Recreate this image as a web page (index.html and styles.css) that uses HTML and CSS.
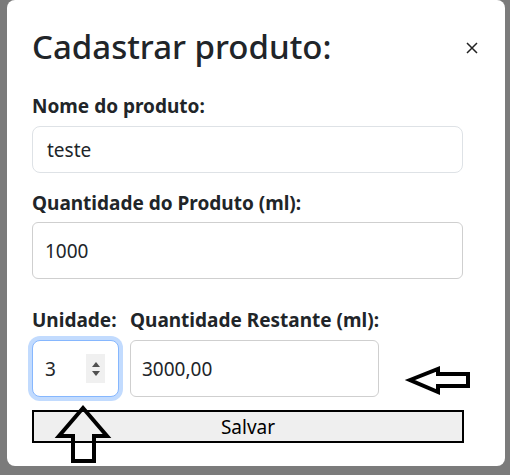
FILE: index.html
```html
<!DOCTYPE html>
<html lang="pt-BR">
<head>
<meta charset="utf-8">
<title>Cadastrar produto</title>
<link rel="stylesheet" href="styles.css">
</head>
<body>
<div class="stage">
  <div class="modal">
    <div class="modal-header">
      <h2 class="modal-title">Cadastrar produto:</h2>
      <span class="btn-close" aria-label="Fechar">
        <svg width="12" height="12" viewBox="0 0 12 12"><path d="M1 1L11 11M11 1L1 11" stroke="#222" stroke-width="1.5" fill="none"/></svg>
      </span>
    </div>
    <form class="modal-body">
      <label class="lbl lbl-first">Nome do produto:</label>
      <div class="field field-light">teste</div>
      <label class="lbl lbl-second">Quantidade do Produto (ml):</label>
      <div class="field field-tall">1000</div>
      <div class="row">
        <div class="col">
          <label class="lbl">Unidade:</label>
          <div class="field field-num">
            <span class="num-val">3</span>
            <span class="spinner"><span class="tri-up"></span><span class="tri-down"></span></span>
          </div>
        </div>
        <div class="col">
          <label class="lbl">Quantidade Restante (ml):</label>
          <div class="field field-tall field-rest">3000,00</div>
        </div>
      </div>
      <div class="btn-save">Salvar</div>
    </form>
  </div>
  <svg class="annot" width="510" height="475" viewBox="0 0 510 475">
    <polygon points="410,380 438,369 438,374 468,374 468,386 438,386 438,392" fill="none" stroke="#000" stroke-width="4" stroke-linejoin="miter"/>
    <polygon points="83,408 107,436 94,436 94,461 73,461 73,436 59,436" fill="none" stroke="#000" stroke-width="4" stroke-linejoin="miter"/>
  </svg>
</div>
</body>
</html>
```

FILE: styles.css
```css
html, body {
  margin: 0;
  padding: 0;
}
body {
  background: #7b7b7b;
  font-family: "Noto Sans", "Open Sans", "DejaVu Sans", sans-serif;
  color: #212529;
}
.stage {
  position: relative;
  width: 510px;
  height: 475px;
  overflow: hidden;
}
.modal {
  margin-left: 7px;
  width: 498px;
  height: 466px;
  box-sizing: border-box;
  background: #fff;
  border-radius: 8px;
  padding: 27px 25px 0 25px;
}
.modal-header {
  display: flex;
  align-items: center;
  justify-content: space-between;
  height: 40px;
}
.modal-title {
  margin: 0;
  font-size: 33px;
  font-weight: 500;
  line-height: 40px;
  color: #212529;
}
.btn-close {
  display: flex;
  width: 12px;
  height: 12px;
  margin-right: 2px;
  margin-top: 2px;
}
.modal-body {
  display: flex;
  flex-direction: column;
  width: 431px;
}
.lbl {
  display: block;
  font-size: 19px;
  font-weight: 700;
  line-height: 24px;
  margin-bottom: 8px;
}
.lbl-first {
  margin-top: 27px;
}
.lbl-second {
  margin-top: 18px;
  margin-bottom: 7px;
}
.field {
  box-sizing: border-box;
  display: flex;
  align-items: center;
  font-size: 19px;
  padding: 0 12px;
  background: #fff;
  color: #212529;
}
.field-light {
  height: 47px;
  border: 1px solid #dee2e6;
  border-radius: 8px;
  padding-left: 14px;
}
.field-tall {
  height: 57px;
  border: 1px solid #cfcfcf;
  border-radius: 6px;
}
.field-rest {
  padding-left: 11px;
}
.row {
  display: grid;
  grid-template-columns: 87px 249px;
  column-gap: 11px;
  margin-top: 29px;
}
.row .lbl {
  margin-bottom: 8px;
  white-space: nowrap;
}
.field-num {
  height: 57px;
  border: 1px solid #86b7fe;
  border-radius: 8px;
  box-shadow: 0 0 0 4px rgba(13, 110, 253, 0.25);
  justify-content: space-between;
  padding-right: 13px;
}
.spinner {
  display: flex;
  flex-direction: column;
  align-items: center;
  justify-content: center;
  gap: 4px;
  width: 19px;
  height: 29px;
  background: #f0f0f0;
}
.tri-up {
  width: 0;
  height: 0;
  border-left: 4px solid transparent;
  border-right: 4px solid transparent;
  border-bottom: 5px solid #505050;
}
.tri-down {
  width: 0;
  height: 0;
  border-left: 4px solid transparent;
  border-right: 4px solid transparent;
  border-top: 5px solid #505050;
}
.btn-save {
  margin-top: 13px;
  height: 33px;
  box-sizing: border-box;
  border: 2px solid #000;
  background: #efefef;
  display: flex;
  align-items: center;
  justify-content: center;
  font-size: 19px;
  color: #000;
  width: 432px;
}
.annot {
  position: absolute;
  left: 0;
  top: 0;
  pointer-events: none;
}
```
